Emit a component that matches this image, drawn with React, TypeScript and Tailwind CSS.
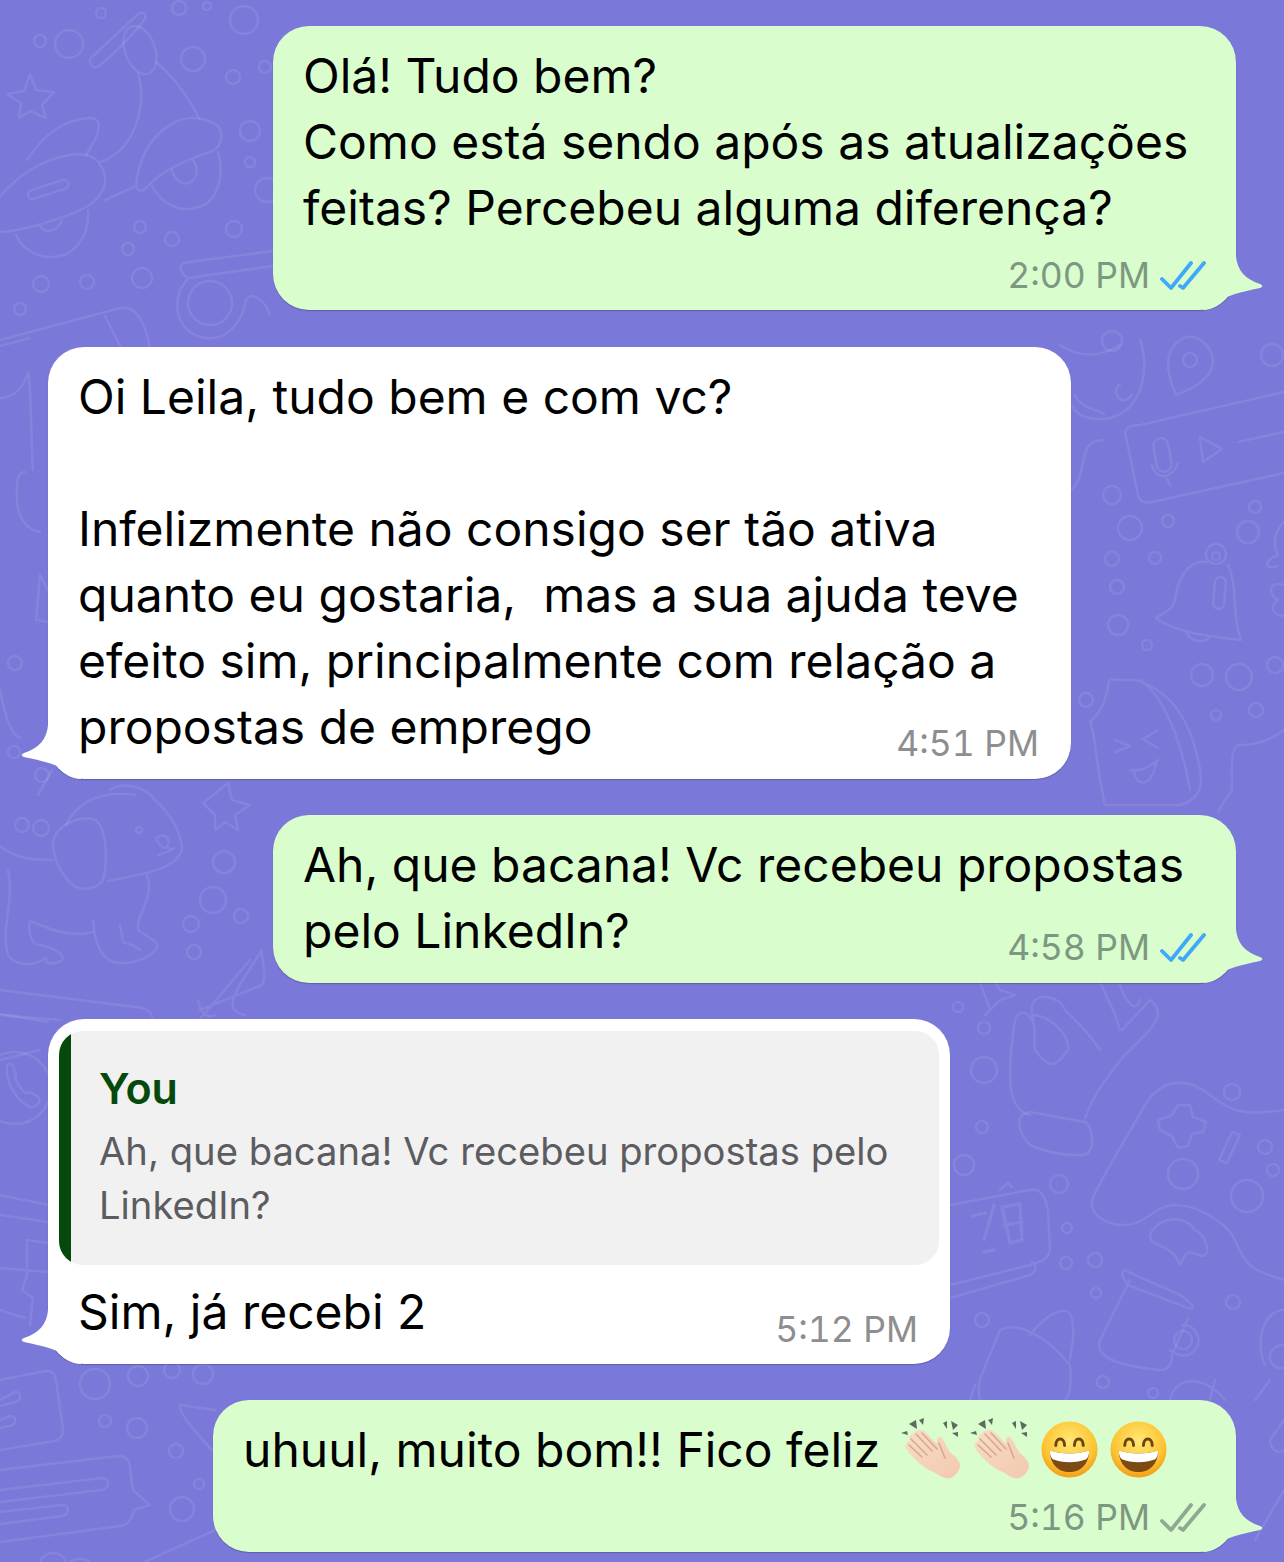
import React from "react";

const DOTS: [number, number, number][] = [
  [40, 41, 6], [69, 44, 14], [101, 13, 5], [179, 8, 7], [207, 6, 4], [244, 20, 14], [193, 59, 12], [233, 77, 7], [265, 67, 6],
  [250, 131, 10], [250, 162, 5], [267, 190, 12], [234, 229, 8], [140, 227, 6], [172, 239, 7], [128, 249, 6], [41, 284, 8], [87, 282, 7], [142, 278, 10], [20, 309, 6],
  [1112, 341, 10], [1272, 355, 11], [1112, 495, 9], [1130, 528, 12], [1168, 521, 6], [1255, 507, 6], [1248, 532, 11],
  [1112, 559, 7], [1155, 558, 6], [1117, 587, 7], [1118, 625, 10], [1147, 645, 5], [1202, 675, 11], [1239, 677, 13], [1216, 715, 5], [1256, 710, 7], [1086, 700, 7], [1275, 665, 8],
  [15, 663, 7], [14, 752, 6], [42, 775, 7],
  [41, 828, 8], [22, 825, 7], [224, 862, 11], [213, 900, 13], [191, 924, 8], [241, 916, 7], [194, 952, 7],
  [984, 1028, 6], [958, 1007, 5], [984, 1070, 13], [982, 1127, 6], [964, 1165, 10], [1059, 1184, 9], [1067, 1228, 5], [1066, 1263, 6], [1095, 1260, 7], [1096, 1293, 5],
  [982, 1320, 7], [1232, 1092, 8], [1265, 1147, 7], [1273, 1170, 6], [1247, 1196, 16], [1233, 1302, 7], [1103, 1382, 6], [1153, 1393, 5],
  [95, 1384, 15], [138, 1376, 10], [172, 1370, 8], [203, 1374, 10], [105, 1421, 6], [137, 1428, 10], [176, 1451, 7], [199, 1484, 5], [182, 1509, 12],
];

const Wallpaper = () => (
  <svg className="absolute inset-0" width="1284" height="1562" viewBox="0 0 1284 1562" fill="none" stroke="#ffffff" strokeOpacity="0.085" strokeWidth="2.6" strokeLinecap="round" strokeLinejoin="round">
    {DOTS.map(([cx, cy, r], i) => (
      <circle key={i} cx={cx} cy={cy} r={r} />
    ))}
    {/* scooter */}
    <path d="M92 66 C88 62 90 58 94 55 L138 14 C143 11 147 14 145 19 C132 36 112 56 100 65 C97 68 94 68 92 66Z" />
    <ellipse cx="140" cy="50" rx="15" ry="25" transform="rotate(-20 140 50)" />
    <path d="M138 73 C148 110 132 152 100 162 M156 62 C175 78 190 100 199 118" />
    <path d="M27 160 C48 128 70 118 92 118 C102 120 102 130 86 155" />
    <path d="M0 197 C30 160 70 152 86 155 C100 158 106 172 105 184 C100 200 90 208 60 218 C30 228 10 232 0 232" />
    <rect x="27" y="185" width="42" height="9" rx="4.5" transform="rotate(-18 48 189)" />
    <path d="M16 235 C22 250 38 257 52 257 C75 257 90 235 88 210 M40 226 C45 234 58 232 62 220" />
    <path d="M105 200 L136 186 C138 192 142 192 146 188 C160 172 185 160 210 152 C222 148 224 134 218 126 C208 118 186 114 172 124 C150 136 138 160 136 186" />
    <path d="M152 186 C162 205 180 212 196 208 C215 204 226 180 218 152 M172 170 C176 185 190 188 196 176 C198 170 196 164 193 160" />
    <path d="M30 74 L36 90 L54 92 L42 105 L46 118 L30 111 L19 118 L21 103 L7 94 L24 91Z" />
    {/* whistle and tube */}
    <path d="M183 263 L280 250 M188 278 L280 265 M183 263 C178 268 182 274 188 278 L180 290 C170 320 190 340 212 338 C228 338 242 322 246 300 C252 290 266 302 270 315" />
    <circle cx="210" cy="303" r="22" />
    <path d="M0 340 L120 308 C135 305 145 320 150 348 M105 316 L122 350 M0 346 L30 338" />
    {/* left strip */}
    <path d="M0 398 C15 398 25 385 28 372 C32 395 30 420 33 470 M25 472 C18 472 16 480 17 500 C18 520 28 530 40 532" />
    <path d="M48 590 L40 575 L36 620 L48 622 M0 690 C4 710 10 735 20 738 M52 770 L38 795" />
    {/* dog */}
    <path d="M66 825 C78 800 105 790 135 795 M110 790 C120 782 145 785 155 800 C172 815 182 835 182 850 C175 868 155 872 108 881" />
    <path d="M53 843 C55 825 80 815 96 820 C107 830 108 860 103 880 C95 892 75 892 66 878 C58 868 53 855 53 843Z" />
    <circle cx="139" cy="830" r="3" />
    <path d="M156 838 C165 832 170 838 168 845 C166 850 160 848 156 838 M168 848 C172 850 174 848 174 848 M158 855 L172 850" />
    <path d="M147 875 C155 900 135 915 138 930 C145 935 155 940 158 945 C155 955 140 962 125 963 C105 965 95 950 93 920 M120 925 L123 942 C130 945 135 945 140 950" />
    <path d="M93 932 C80 935 65 935 48 928 L30 921 C28 930 30 945 40 945 C55 948 65 955 62 960 C55 965 45 965 46 958 C30 968 15 965 8 955 C0 930 15 900 8 870 M0 846 C15 858 30 860 53 860" />
    <path d="M245 1015 C218 1010 240 985 262 950 C260 955 268 975 262 985 L200 1010 M195 1025 L250 960 M198 1000 C200 1010 205 1020 215 1015 M0 990 L135 1007 C148 1008 150 1012 153 1018 M0 1015 L60 1020" />
    <path d="M203 803 L228 783 L232 800 L250 805 L235 815 L238 830 L225 822 L215 830 L215 815Z" />
    {/* phone ring left of reply */}
    <circle cx="15" cy="1088" r="36" />
    <path d="M7 1066 C5 1080 15 1100 30 1107 C38 1108 42 1100 37 1096 L30 1092 C26 1095 24 1092 20 1087 C16 1082 14 1078 16 1075 L13 1066 C12 1063 8 1063 7 1066Z" />
    <path d="M0 1014 L48 1022 M0 1060 L40 1050 M0 1195 L48 1205 M0 1215 L48 1222 M27 1240 L27 1275 L22 1290 L33 1298 L30 1325 M27 1240 L48 1243 M0 1268 L48 1272 M0 1310 L25 1318" />
    {/* chat bubbles bottom left */}
    <path d="M0 1380 L45 1371 C52 1370 55 1374 56 1380 L63 1430 C63 1436 60 1440 54 1441 L0 1450" />
    <path d="M0 1400 L15 1392 C22 1392 22 1400 15 1402 L0 1406 M0 1420 L10 1416 C17 1416 17 1424 10 1426 L0 1428" />
    <path d="M0 1470 L118 1456 C126 1456 130 1460 130 1468 L133 1490 L150 1505 L134 1510 C132 1520 128 1525 120 1526 L0 1542" />
    <path d="M0 1490 L102 1478 C110 1478 110 1488 102 1490 L0 1502 M0 1512 L62 1505 C70 1505 70 1514 62 1516 L0 1524" />
    <path d="M40 1562 C45 1550 62 1550 66 1562 M70 1562 C75 1558 85 1558 90 1562 M145 1562 L215 1530 M180 1405 L215 1410 M180 1405 C178 1412 195 1432 212 1450" />
    {/* pin, mic bar, bell */}
    <path d="M1176 395 C1165 370 1165 350 1180 340 C1195 330 1212 345 1213 362 C1212 378 1195 388 1176 395Z" />
    <circle cx="1190" cy="360" r="7" />
    <path d="M1125 432 C1128 425 1132 426 1140 425 L1284 392 M1125 432 L1138 495 C1140 502 1146 504 1152 502 L1284 473" />
    <rect x="1155" y="438" width="15" height="34" rx="7.5" transform="rotate(-10 1162 455)" />
    <path d="M1152 465 C1155 480 1172 480 1178 463 M1166 478 L1170 485 M1200 437 L1222 449 L1203 462Z M1238 442 L1284 432" />
    <circle cx="1216" cy="554" r="10" /> <circle cx="1216" cy="556" r="4" />
    <path d="M1207 562 C1190 560 1178 575 1175 600 C1172 612 1163 612 1156 618 C1175 632 1205 636 1241 640 C1232 620 1238 585 1228 565 M1186 630 C1188 642 1205 645 1210 636" />
    <rect x="1214" y="577" width="11" height="32" rx="5.5" transform="rotate(5 1220 593)" />
    <path d="M1284 522 C1275 530 1272 545 1278 555 C1265 560 1262 570 1278 566 M1284 585 C1268 580 1268 595 1278 600 C1265 610 1280 618 1284 615" />
    {/* toast */}
    <path d="M1115 680 C1105 676 1110 690 1106 694 C1105 705 1095 718 1090 722 C1095 730 1095 760 1105 805 L1180 805 C1200 800 1205 785 1198 760 C1190 720 1170 690 1135 680 Z M1140 680 C1170 700 1185 760 1190 790" />
    <path d="M1115 740 L1130 746 L1115 752 M1158 730 L1143 739 L1158 748 M1130 770 C1145 772 1150 765 1158 760 M1134 771 C1135 785 1150 790 1156 764" />
    <path d="M1284 730 C1270 740 1258 745 1240 745 C1230 745 1232 765 1232 790 C1225 800 1220 808 1218 812" />
    <path d="M1060 345 C1075 355 1095 360 1120 345 M1140 340 C1150 370 1142 410 1110 418 C1090 422 1075 415 1072 405 M1120 385 C1110 388 1120 410 1132 395 M1075 395 C1082 410 1100 410 1104 414 M1104 440 C1075 440 1090 470 1072 490" />
    {/* hand */}
    <path d="M1030 1115 C1010 1110 1005 1085 1015 1020 C1020 1008 1030 1012 1034 1025 C1036 1040 1032 1050 1037 1052 C1052 1075 1060 1060 1068 1050 C1070 1035 1050 1015 1032 1015 M1034 1020 C1022 990 1058 992 1065 1010 C1078 1022 1090 1035 1100 1050 M1122 1030 L1150 1000 C1170 1015 1150 1030 1122 1058 C1110 1075 1095 1090 1085 1118" />
    <path d="M1030 1112 L1085 1122 C1092 1125 1094 1145 1090 1150 C1088 1155 1080 1156 1075 1155 C1060 1155 1040 1150 1030 1145 C1020 1135 1012 1115 1030 1112Z" />
    <path d="M1100 982 C1105 995 1115 1010 1120 1030 M1120 985 C1125 1000 1135 1015 1140 1000 M980 982 L990 1010 L985 1015 L1000 1000 L1015 995 L1000 990 L995 982" />
    {/* controller */}
    <path d="M1092 1200 C1100 1180 1125 1140 1145 1105 C1160 1080 1185 1075 1210 1095 C1235 1115 1250 1115 1284 1110 M1092 1200 C1090 1215 1105 1225 1125 1225 C1145 1225 1155 1205 1175 1205 C1195 1205 1225 1220 1235 1240 C1245 1265 1250 1270 1284 1280" />
    <path d="M1178 1105 L1190 1105 L1193 1117 L1206 1122 L1203 1132 L1192 1134 L1188 1146 L1178 1148 L1172 1136 L1160 1130 L1158 1120 L1172 1115Z" />
    <circle cx="1183" cy="1174" r="15" />
    <path d="M1232 1132 L1240 1135 L1227 1163 L1219 1160Z" />
    <path d="M1180 1265 C1170 1240 1150 1250 1150 1235 C1160 1215 1185 1215 1195 1230 C1205 1235 1210 1250 1205 1255 C1195 1260 1190 1240 1180 1265Z" />
    {/* clock */}
    <path d="M950 1205 L1030 1190 C1040 1188 1045 1195 1048 1210 L1050 1250 C1048 1260 1040 1262 1030 1265 L950 1285 M1000 1190 L1008 1183 L1012 1187 M950 1298 L1030 1275 C1037 1272 1037 1265 1032 1262" />
    <path d="M972 1216 L985 1213 M994 1205 L984 1240 M984 1252 L994 1250 M1002 1207 L1020 1204 L1022 1240 L1010 1243 L1002 1207 M1004 1225 L1022 1222" strokeWidth="3.5" strokeDasharray="10 3" />
    {/* mug */}
    <path d="M1124 1270 L1180 1295 C1195 1305 1195 1310 1188 1308 L1128 1285 C1120 1275 1122 1270 1124 1270Z M1130 1280 L1100 1340 C1095 1355 1110 1365 1160 1370 C1168 1370 1172 1365 1172 1355 L1188 1318 M1182 1325 C1195 1325 1200 1335 1198 1345 C1192 1358 1180 1358 1170 1350" />
    <circle cx="1183" cy="1340" r="9" />
    {/* shell and others at the bottom */}
    <path d="M980 1400 C975 1380 985 1370 1000 1330 C1020 1320 1050 1340 1070 1365 C1072 1385 1070 1395 1065 1400 M1030 1335 C1045 1315 1070 1300 1072 1320 C1075 1335 1072 1345 1070 1360 M970 1400 L975 1385 M1215 1380 L1210 1400 M1170 1400 C1175 1375 1205 1375 1225 1400" />
    <path d="M1284 1310 C1262 1310 1255 1345 1265 1365 M1284 1345 C1265 1345 1265 1370 1284 1368 M1270 1380 L1255 1400" />
    <path d="M1284 1420 L1270 1440 C1270 1450 1280 1455 1284 1450 M1255 1540 L1284 1490" />
  </svg>
);

const Tail = ({ side, fill }: { side: "left" | "right"; fill: string }) => (
  <svg
    className={side === "right" ? "absolute bottom-0 right-[-27px]" : "absolute bottom-0 left-[-27px] -scale-x-100"}
    width="60"
    height="60"
    viewBox="0 0 60 60"
  >
    <path d="M33 0 L33 6 C34 20 42 29 57 34 C60 35 60 37 57 38 C48 40 36 42 24 47 C18 54 10 60 0 60 L0 0Z" fill={fill} />
  </svg>
);

const Ticks = ({ color }: { color: string }) => (
  <svg width="46" height="32" viewBox="0 0 46 32" fill="none" stroke={color} strokeWidth="3.8" strokeLinecap="round" strokeLinejoin="round">
    <path d="M2 19 L11 28 L31 3" />
    <path d="M20 26 L23 28 L44 3" />
  </svg>
);

const Meta = ({ time, mine, ticks, className }: { time: string; mine?: boolean; ticks?: string; className: string }) => (
  <div className={`flex h-[40px] items-center justify-end gap-[10px] text-[35.5px] leading-[40px] tabular-nums ${mine ? "pr-[30px] text-[#7d9882]" : "pr-[32px] text-[#8e8e90]"} ${className}`}>
    <span>{time}</span>
    {ticks && <Ticks color={ticks} />}
  </div>
);

const Clap = () => (
  <svg width="60" height="64" viewBox="0 0 60 64">
    <defs>
      <linearGradient id="skin" x1="0" y1="0" x2="1" y2="1">
        <stop offset="0" stopColor="#f8dcc8" />
        <stop offset="1" stopColor="#f2c9ae" />
      </linearGradient>
    </defs>
    <path d="M8 6 L15 2 L16 11Z M18 2 L23 0 L22 7Z M6 13 L0 15 L7 17Z M42 5 L46 3 L46 11Z M50 3 L57 7 L52 12Z M51 15 L57 14 L57 19Z" fill="#5d6a60" />
    <path d="M20 12 C24 12 30 20 36 26 C35 20 38 17 41 20 C44 24 47 32 50 35 C55 39 59 43 59 48 C58 56 50 62 44 60 C38 58 34 54 28 52 C18 46 8 36 5 30 C3 26 6 23 9 23 C7 20 9 16 12 16 C13 14 17 11 20 12Z" fill="url(#skin)" />
    <path d="M15 16 L31 33 M10 21 L26 37 M8 27 L21 39 M21 15 L36 31 M38 25 L44 40" stroke="#d9a98c" strokeWidth="1.6" strokeLinecap="round" fill="none" />
  </svg>
);

const Grin = () => (
  <svg width="57" height="57" viewBox="0 0 58 58">
    <defs>
      <radialGradient id="face" cx="0.5" cy="0.35" r="0.7">
        <stop offset="0" stopColor="#ffe873" />
        <stop offset="0.65" stopColor="#fdc534" />
        <stop offset="1" stopColor="#ee9412" />
      </radialGradient>
    </defs>
    <circle cx="29" cy="29" r="28.5" fill="url(#face)" />
    <path d="M9 30 C20 34 38 34 49 30 C49 44 40 52 29 52 C18 52 9 44 9 30Z" fill="#7c4a12" />
    <path d="M9 30 C20 34 38 34 49 30 C49 34 48 37 46 39 C36 43 22 43 12 39 C10 37 9 34 9 30Z" fill="#ffffff" />
    <path d="M15 25 C15 16 24 16 24 25 M34 25 C34 16 43 16 43 25" stroke="#6b4312" strokeWidth="3" strokeLinecap="round" fill="none" />
  </svg>
);

const bubble = "relative rounded-[36px] shadow-[0_1px_1px_rgba(0,0,0,0.22)]";
const mine = `${bubble} bg-[#dafdcd] self-end mr-[48px]`;
const theirs = `${bubble} bg-white self-start ml-[48px]`;

export default function App() {
  return (
    <div className="relative flex h-[1562px] w-[1284px] flex-col gap-[36px] overflow-hidden bg-[#7a78d8] pt-[26px] text-[48px] leading-[66px] text-black [font-family:Inter,'Liberation_Sans',sans-serif]">
      <Wallpaper />

      <div className={`${mine} mb-px w-[963px]`}>
        <Tail side="right" fill="#dafdcd" />
        <div className="relative pl-[30px] pt-[17px]">
          <p>Olá! Tudo bem?</p>
          <p>Como está sendo após as atualizações</p>
          <p>feitas? Percebeu alguma diferença?</p>
        </div>
        <Meta time="2:00 PM" mine ticks="#3fa9f5" className="relative mt-[15px]" />
        <div className="h-[14px]" />
      </div>

      <div className={`${theirs} w-[1023px]`}>
        <Tail side="left" fill="#ffffff" />
        <div className="relative pl-[30px] pt-[17px]">
          <p>Oi Leila, tudo bem e com vc?</p>
          <p>&nbsp;</p>
          <p>Infelizmente não consigo ser tão ativa</p>
          <p>quanto eu gostaria,&nbsp; mas a sua ajuda teve</p>
          <p>efeito sim, principalmente com relação a</p>
          <p>propostas de emprego</p>
        </div>
        <Meta time="4:51 PM" className="relative mt-[-36px]" />
        <div className="h-[15px]" />
      </div>

      <div className={`${mine} w-[963px]`}>
        <Tail side="right" fill="#dafdcd" />
        <div className="relative pl-[30px] pt-[17px]">
          <p>Ah, que bacana! Vc recebeu propostas</p>
          <p>pelo LinkedIn?</p>
        </div>
        <Meta time="4:58 PM" mine ticks="#3fa9f5" className="relative mt-[-36px]" />
        <div className="h-[15px]" />
      </div>

      <div className={`${theirs} w-[902px]`}>
        <Tail side="left" fill="#ffffff" />
        <div className="relative px-[11px] pt-[12px]">
          <div className="flex h-[234px] overflow-hidden rounded-[24px] bg-[#f1f1f1]">
            <div className="w-[12px] bg-[#064a0b]" />
            <div className="pl-[28px] pt-[30px]">
              <p className="text-[43px] font-semibold leading-[54px] text-[#064a0b]">You</p>
              <p className="mt-[9px] text-[38.2px] leading-[54px] text-[#5c5c60]">
                Ah, que bacana! Vc recebeu propostas pelo
                <br />
                LinkedIn?
              </p>
            </div>
          </div>
        </div>
        <p className="relative mt-[14px] pl-[30px]">Sim, já recebi 2</p>
        <Meta time="5:12 PM" className="relative mt-[-35px]" />
        <div className="h-[14px]" />
      </div>

      <div className={`${mine} w-[1023px]`}>
        <Tail side="right" fill="#dafdcd" />
        <div className="relative flex items-center pl-[30px] pt-[17px]">
          <span>uhuul, muito bom!! Fico feliz</span>
          <span className="ml-[21px] flex w-[69px]"><Clap /></span>
          <span className="flex w-[69px]"><Clap /></span>
          <span className="ml-[2px] mt-[-2px] flex w-[69px]"><Grin /></span>
          <span className="mt-[-2px] flex w-[69px]"><Grin /></span>
        </div>
        <Meta time="5:16 PM" mine ticks="#8fa893" className="relative mt-[15px]" />
        <div className="h-[14px]" />
      </div>
    </div>
  );
}
